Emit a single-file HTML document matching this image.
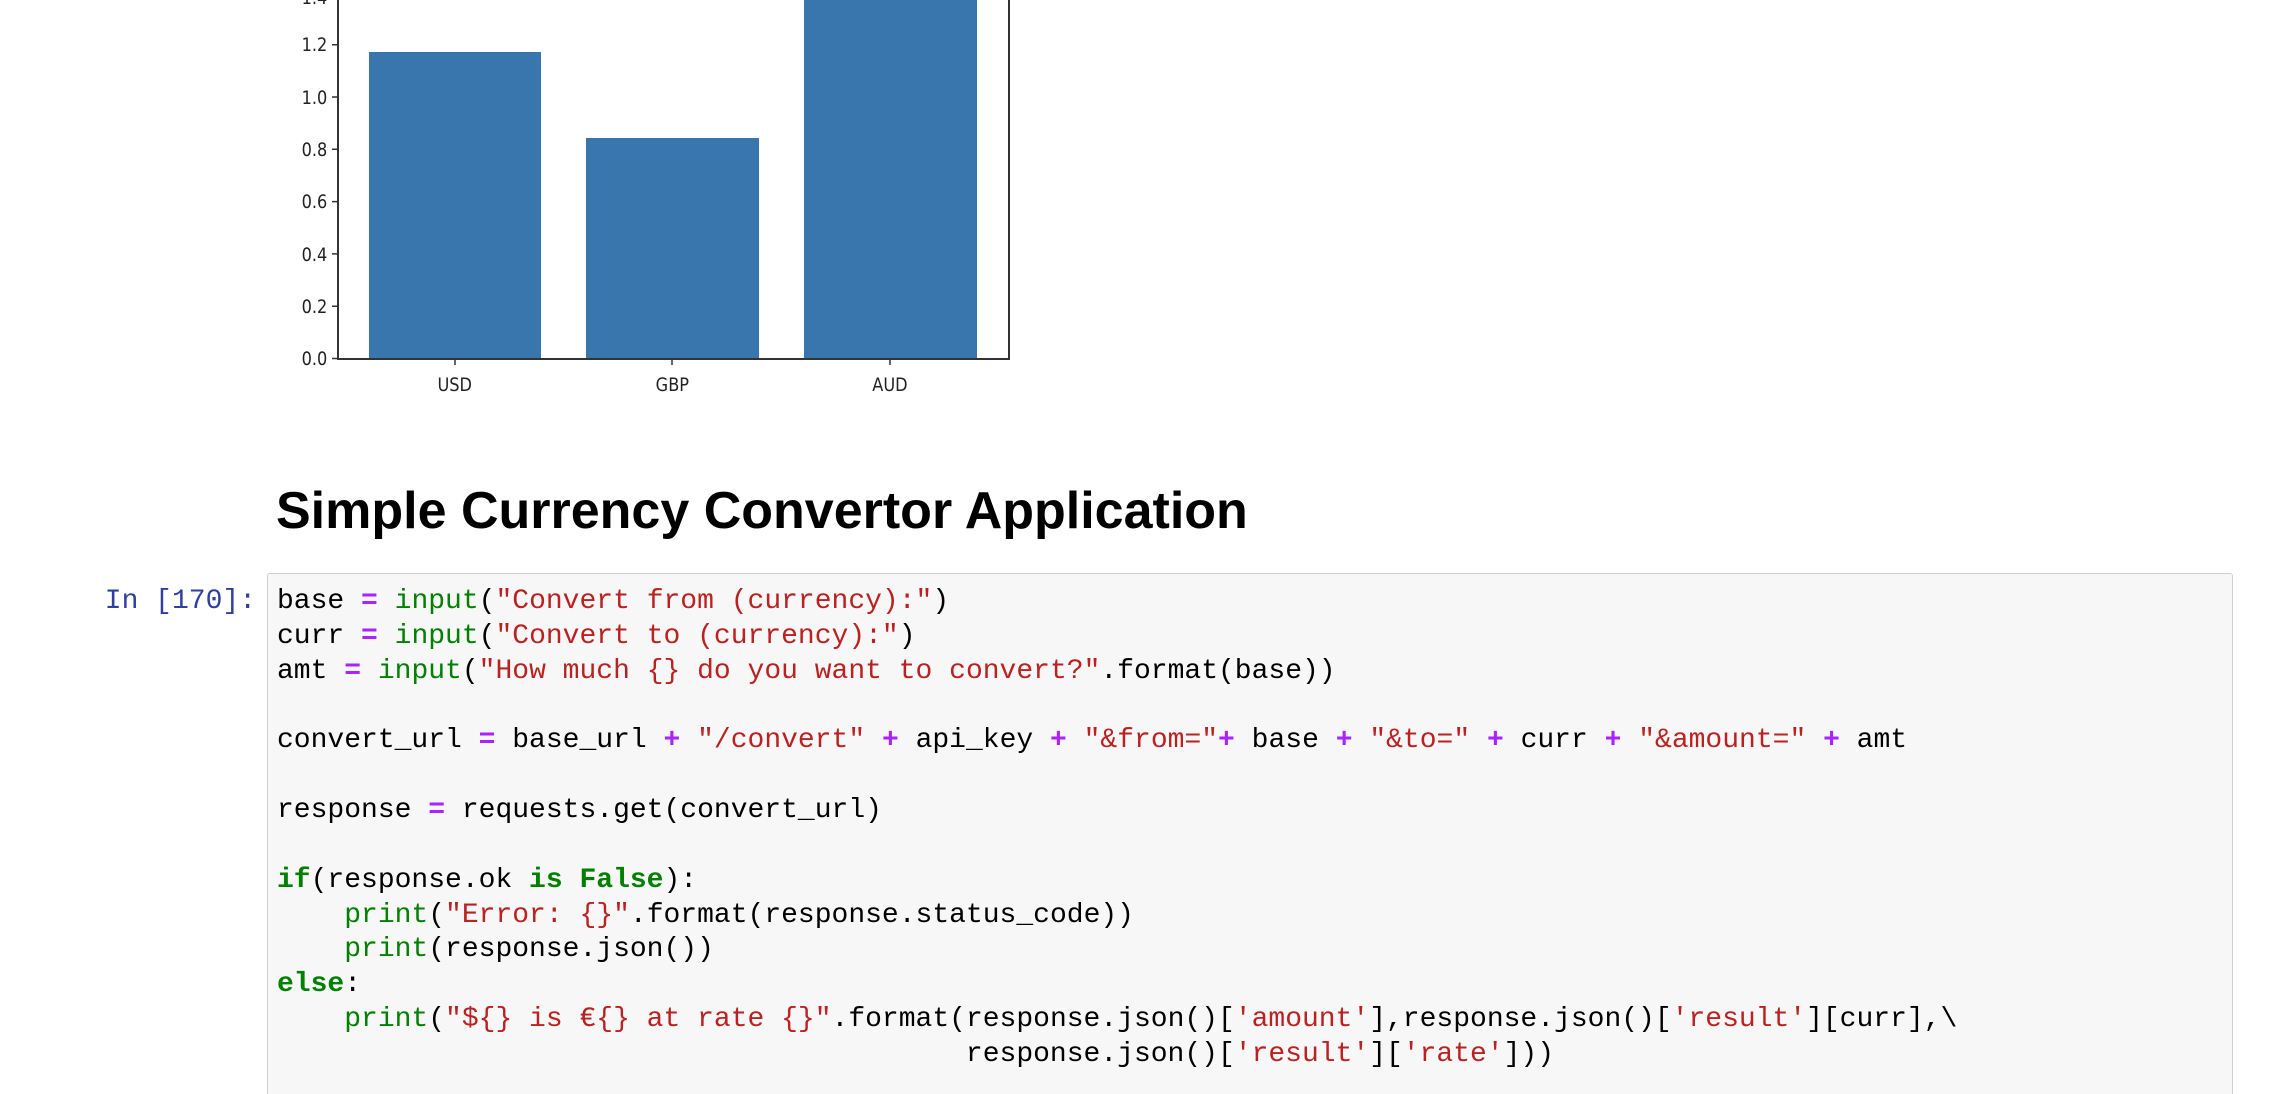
<!DOCTYPE html>
<html><head><meta charset="utf-8"><style>
html,body{margin:0;padding:0;background:#fff;width:2276px;height:1094px;overflow:hidden;position:relative}
h2{position:absolute;left:276px;top:481px;margin:0;font:bold 52px "Liberation Sans",sans-serif;color:#000;white-space:nowrap}
.prompt{position:absolute;left:0;width:256px;text-align:right;top:585px;font:28px/34.84px "Liberation Mono",monospace;color:#303f9f;white-space:pre}
.cell{position:absolute;left:267px;top:573px;width:1964px;height:560px;background:#f7f7f7;border:1.5px solid #cfcfcf;border-radius:3px}
pre{position:absolute;left:277px;top:585px;margin:0;font:28px/34.84px "Liberation Mono",monospace;color:#000}
.o{color:#aa22ff;font-weight:bold}.b{color:#008000}.s{color:#ba2121}.k{color:#008000;font-weight:bold}
</style></head><body>
<svg width="1100" height="420" style="position:absolute;left:0;top:0" font-family="DejaVu Sans,Liberation Sans,sans-serif" font-size="19" fill="#222">
<rect x="369" y="52" width="172" height="307" fill="#3a76ae"/>
<rect x="586" y="138" width="173" height="221" fill="#3a76ae"/>
<rect x="804" y="-10" width="173" height="369" fill="#3a76ae"/>
<path d="M338 -10V359H1009V-10" fill="none" stroke="#333" stroke-width="2"/>
<g stroke="#333" stroke-width="1.5">
<path d="M332 358.5h6M332 306.2h6M332 253.9h6M332 201.6h6M332 149.3h6M332 97h6M332 44.7h6M455 359v6M672 359v6M890 359v6"/></g>
<g text-anchor="end" transform="scale(0.85,1)">
<text x="385" y="365">0.0</text><text x="385" y="313">0.2</text><text x="385" y="261">0.4</text><text x="385" y="208">0.6</text><text x="385" y="156">0.8</text><text x="385" y="104">1.0</text><text x="385" y="51">1.2</text><text x="385" y="4">1.4</text></g>
<g text-anchor="middle" transform="scale(0.85,1)"><text x="535" y="391">USD</text><text x="791" y="391">GBP</text><text x="1047" y="391">AUD</text></g>
</svg>
<h2>Simple Currency Convertor Application</h2>
<div class="cell"></div>
<div class="prompt">In [170]:</div>
<pre>base <span class="o">=</span> <span class="b">input</span>(<span class="s">"Convert from (currency):"</span>)
curr <span class="o">=</span> <span class="b">input</span>(<span class="s">"Convert to (currency):"</span>)
amt <span class="o">=</span> <span class="b">input</span>(<span class="s">"How much {} do you want to convert?"</span>.format(base))

convert_url <span class="o">=</span> base_url <span class="o">+</span> <span class="s">"/convert"</span> <span class="o">+</span> api_key <span class="o">+</span> <span class="s">"&amp;from="</span><span class="o">+</span> base <span class="o">+</span> <span class="s">"&amp;to="</span> <span class="o">+</span> curr <span class="o">+</span> <span class="s">"&amp;amount="</span> <span class="o">+</span> amt

response <span class="o">=</span> requests.get(convert_url)

<span class="k">if</span>(response.ok <span class="k">is</span> <span class="k">False</span>):
    <span class="b">print</span>(<span class="s">"Error: {}"</span>.format(response.status_code))
    <span class="b">print</span>(response.json())
<span class="k">else</span>:
    <span class="b">print</span>(<span class="s">"${} is €{} at rate {}"</span>.format(response.json()[<span class="s">'amount'</span>],response.json()[<span class="s">'result'</span>][curr],\
                                         response.json()[<span class="s">'result'</span>][<span class="s">'rate'</span>]))
</pre>
</body></html>
